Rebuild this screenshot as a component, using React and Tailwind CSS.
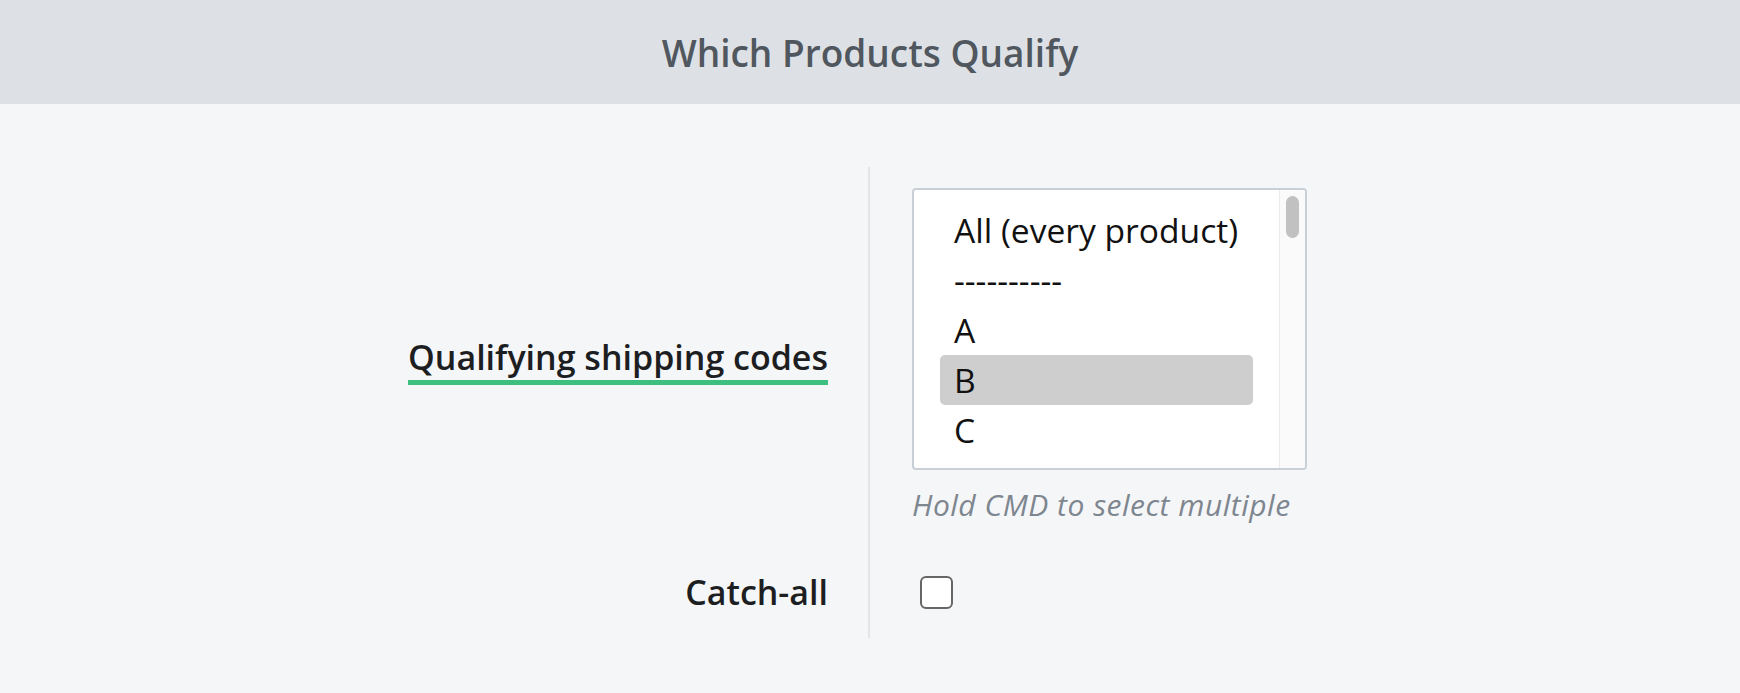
import React from "react";

const OPTIONS = [
  { label: "All (every product)", selected: false },
  { label: "----------", selected: false },
  { label: "A", selected: false },
  { label: "B", selected: true },
  { label: "C", selected: false },
];

const App = () => {
  return (
    <div className="min-h-screen bg-[#f5f6f8] font-['Open_Sans',sans-serif]">
      {/* Header */}
      <div className="h-[104px] bg-[#dde1e5] flex items-center justify-center">
        <h1 className="text-[37px] leading-none font-semibold text-[#50575f]">
          Which Products Qualify
        </h1>
      </div>

      <div className="pt-[63px]">
        {/* Shipping codes row */}
        <div className="flex">
          <div className="w-[868px] pr-[40px] pt-[167px] text-right">
            <span className="inline-block text-[34px] leading-[46px] font-semibold text-[#1d1e21] border-b-[5px] border-[#3dbf80]">
              Qualifying shipping codes
            </span>
          </div>
          <div className="border-l-2 border-[#e3e5e8] pl-[42px] pt-[21px]">
            <div className="w-[395px] h-[282px] bg-white border-2 border-[#c8cfd7] rounded-[4px] flex overflow-hidden">
              <div className="flex-1 px-[26px] pt-[15px]">
                {OPTIONS.map((opt) => (
                  <div
                    key={opt.label}
                    className={
                      opt.selected
                        ? "h-[50px] px-[14px] text-[33.6px] leading-[50px] whitespace-nowrap text-[#111] bg-[#cecece] rounded-[5px]"
                        : "h-[50px] px-[14px] text-[33.6px] leading-[50px] whitespace-nowrap text-[#111]"
                    }
                  >
                    {opt.label}
                  </div>
                ))}
              </div>
              {/* scrollbar */}
              <div className="w-[26px] border-l border-[#ebebeb] bg-[#fafafa] pt-[6px] pl-[6px]">
                <div className="w-[13px] h-[42px] rounded-full bg-[#c1c1c1]"></div>
              </div>
            </div>
            <p className="mt-[15px] text-[30px] leading-[40px] italic tracking-[0.5px] text-[#7e868f]">
              Hold CMD to select multiple
            </p>
          </div>
        </div>

        {/* Catch-all row */}
        <div className="flex">
          <div className="w-[868px] pr-[40px] pt-[51px] pb-[29px]">
            <div className="h-[33px] flex items-center justify-end">
              <span className="text-[34px] leading-[33px] font-semibold text-[#1d1e21]">
                Catch-all
              </span>
            </div>
          </div>
          <div className="border-l-2 border-[#e3e5e8] pl-[42px] pt-[51px] pb-[29px]">
            <div className="ml-[8px] w-[33px] h-[33px] border-2 border-[#666] rounded-[6px] bg-white"></div>
          </div>
        </div>
      </div>
    </div>
  );
};

export default App;
